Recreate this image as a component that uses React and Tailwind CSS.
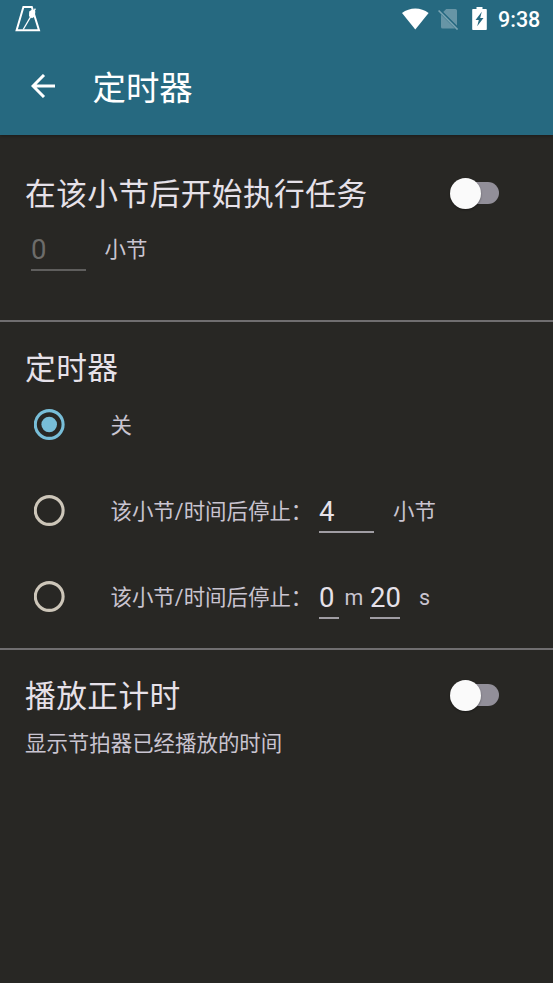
const zh = "font-['Roboto','Noto_Sans_CJK_SC',sans-serif]";

function MetronomeIcon() {
  return (
    <svg className="w-[26px] h-[26px]" viewBox="0 0 26 26" fill="none">
      <path d="M8.4 1h8.4L24 24.2H1.6z" stroke="#fff" strokeWidth="2" />
      <path d="M8.2 23.5L20.4 2.6" stroke="#fff" strokeWidth="1.3" />
      <path d="M14.2 5.5l3.4-2.3 2.8 2.2-.6 5-2.8 1.8-3-2z" fill="#fff" />
    </svg>
  );
}

function StatusBar() {
  return (
    <div className="flex h-[37px] items-center pl-[15px] pr-[12px]">
      <MetronomeIcon />
      <div className="ml-auto flex items-center">
        {/* wifi */}
        <svg className="w-[27px] h-[22px]" viewBox="0 0 28 22" fill="#fff">
          <path d="M0 4.8C4 1.6 8.8 0 13.8 0s9.8 1.6 13.8 4.8L13.8 22z" />
        </svg>
        {/* no sim */}
        <svg className="ml-[9px] w-[21px] h-[22px]" viewBox="0 0 21 22">
          <path d="M8.2 1h9.3a1.5 1.5 0 0 1 1.5 1.5v15.3L5.2 4zM3 6.5l14 14H4.500A1.500 1.500 0 0 1 3 19z" fill="#6795a6" />
          <path d="M1.400 1.700l19 19" stroke="#266980" strokeWidth="1.400" />
          <path d="M.6 2.500l19 19" stroke="#7ba5b3" strokeWidth="1.700" />
        </svg>
        {/* battery, charging */}
        <svg className="ml-[13px] w-[15px] h-[23px]" viewBox="0 0 15 23">
          <path d="M4.500 0h6v2H14a.8.8 0 0 1 .8.8V22.200a.8.8 0 0 1-.8.8H1a.8.8 0 0 1-.8-.8V2.800A.8.8 0 0 1 1 2H4.500z" fill="#fff" />
          <path d="M9.800 4.800L3.500 13h3.300l-1.600 6.300L11.500 11H8.200z" fill="#266980" />
        </svg>
        <span className="ml-[11px] w-[43px] whitespace-nowrap text-[21.500px] leading-[37px] font-medium text-white">
          <span className="relative top-px">9:38</span>
        </span>
      </div>
    </div>
  );
}

function Switch() {
  return (
    <button type="button" role="switch" aria-checked="false" className="flex h-[31px] w-[49px] items-center">
      <span className="z-10 h-[31px] w-[31px] shrink-0 rounded-full bg-[#fafafa] shadow-[0_1px_2px_rgba(0,0,0,0.4)]" />
      <span className="-ml-[10px] h-[22px] w-[28px] shrink-0 rounded-r-full bg-[#928f99]" />
    </button>
  );
}

function Radio({ checked = false }) {
  return (
    <svg className={`w-[31px] h-[31px] shrink-0 ${checked ? 'text-[#78bed8]' : 'text-[#cdc6b9]'}`} viewBox="0 0 31 31">
      <circle cx="15.2" cy="15.5" r="13.9" fill="none" stroke="currentColor" strokeWidth="3.1" />
      {checked && <circle cx="15.2" cy="15.5" r="7.800" fill="currentColor" />}
    </svg>
  );
}

function Heading({ children }) {
  return <h2 className="whitespace-nowrap text-[30.7px] leading-[40px] tracking-[0.450px] text-[#e6e1e9]">{children}</h2>;
}

function Field({ value, className }) {
  return (
    <span className={`block h-[38px] border-b-2 text-[27.500px] ${className}`}>{value}</span>
  );
}

export default function App() {
  return (
    <div className={`flex h-[983px] w-[553px] flex-col overflow-hidden bg-[#282724] text-[21.450px] leading-[30px] text-[#c9c4d0] ${zh}`}>
      <header className="h-[135px] shrink-0 bg-[#266980] shadow-[0_1px_3px_rgba(0,0,0,0.3)]">
        <StatusBar />
        <div className="flex h-[98px] items-center pl-[31px]">
          <svg className="w-[25px] h-[24px]" viewBox="0 0 25 24" fill="none" stroke="#fff" strokeWidth="3">
            <path d="M24 12H2M13 1L2 12l11 11" />
          </svg>
          <h1 className="ml-[36.500px] pt-[5px] text-[33.400px] leading-[44px] text-white">定时器</h1>
        </div>
      </header>

      <section className="h-[187px] shrink-0 border-b-2 border-[#706e70] pt-[38px]">
        <div className="flex h-[40px] items-center pl-[25px] pr-[54px]">
          <div className="pt-[3px]"><Heading>在该小节后开始执行任务</Heading></div>
          <div className="ml-auto"><Switch /></div>
        </div>
        <div className="mt-[20px] flex items-start pl-[31px]">
          <Field value="0" className="w-[55px] leading-[33px] border-[#5f5e5d] text-[#6d6c6a]" />
          <span className="ml-[18.500px] pt-[2px]">小节</span>
        </div>
      </section>

      <section className="h-[328px] shrink-0 border-b-2 border-[#706e70] pt-[27px]">
        <div className="pl-[25px]">
          <Heading>定时器</Heading>
        </div>
        <div className="mt-[-8px] flex h-[86px] items-center pl-[34px]">
          <Radio checked />
          <span className="ml-[45.500px] pt-[3px]">关</span>
        </div>
        <div className="flex h-[86px] items-center pl-[34px]">
          <Radio />
          <span className="ml-[45.500px] w-[208.500px] whitespace-nowrap pt-[3px]">该小节/时间后停止：</span>
          <Field value="4" className="mt-[8px] w-[55px] leading-[34px] border-[#a09da3] text-[#e6e1e9]" />
          <span className="ml-[19px] pt-[3px]">小节</span>
        </div>
        <div className="flex h-[86px] items-center pl-[34px]">
          <Radio />
          <span className="ml-[45.500px] w-[208.500px] whitespace-nowrap pt-[3px]">该小节/时间后停止：</span>
          <Field value="0" className="mt-[8px] w-[19.500px] leading-[34px] border-[#a09da3] text-[#e6e1e9]" />
          <span className="ml-[6px] w-[25.500px] pt-[4px]">m</span>
          <Field value="20" className="mt-[8px] w-[30px] leading-[34px] border-[#a09da3] text-[#e6e1e9]" />
          <span className="ml-[19px] pt-[4px]">s</span>
        </div>
      </section>

      <section className="pt-[25px]">
        <div className="flex h-[40px] items-center pl-[25px] pr-[54px]">
          <div className="pt-[3px]"><Heading>播放正计时</Heading></div>
          <div className="ml-auto"><Switch /></div>
        </div>
        <p className="mt-[14px] pl-[25px]">显示节拍器已经播放的时间</p>
      </section>
    </div>
  );
}
